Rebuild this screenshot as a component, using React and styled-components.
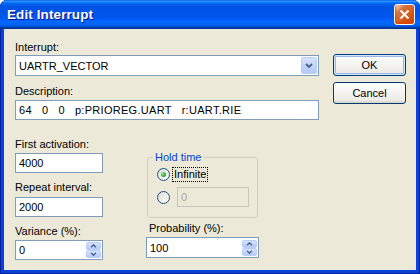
import React from "react";
import styled, { createGlobalStyle } from "styled-components";

const GlobalStyle = createGlobalStyle`
  html, body { margin: 0; padding: 0; background: #fff; overflow: hidden; }
  body { font-family: "Liberation Sans", Arial, sans-serif; font-size: 11px; color: #000; }
`;

const Window = styled.div`
  width: 420px;
  height: 274px;
  display: flex;
  flex-direction: column;
  border-radius: 7px 7px 0 0;
  overflow: hidden;
  background: #0842d6;
  box-shadow: inset 1px 0 #001ea0, inset -1px 0 #001ea0, inset 0 -1px #001ea0;
`;

const TitleBar = styled.div`
  height: 29px;
  flex: none;
  box-sizing: border-box;
  display: flex;
  align-items: center;
  justify-content: space-between;
  padding: 0 5px 1px 7px;
  background: linear-gradient(180deg, #0058ee 0%, #3593ff 4%, #288eff 6%, #127dff 8%, #036ffc 10%,
    #0262ee 14%, #0057e5 20%, #0054e3 24%, #0055eb 56%, #005bf5 66%, #026afe 76%, #0062ef 86%,
    #0052d6 92%, #0040ab 94%, #003092 100%);
`;

const Title = styled.span`
  color: #fff;
  font: bold 13.5px "Liberation Sans", Arial, sans-serif;
  letter-spacing: 0.1px;
  text-shadow: 1px 1px #0f1089;
`;

const CloseButton = styled.div`
  width: 21px;
  height: 21px;
  box-sizing: border-box;
  border: 1px solid #fff;
  border-radius: 3px;
  display: flex;
  align-items: center;
  justify-content: center;
  background: radial-gradient(circle at 90% 90%, #cc4600 0%, #dc6527 55%, #cd7546 70%, #ffccb2 90%, #fff 100%);
  box-shadow: inset 0 -1px 2px 1px #da4600;
`;

const Client = styled.div`
  flex: 1;
  margin: 0 4px 4px;
  padding: 11px 0 0 11px;
  background: #ece9d8;
  display: flex;
  flex-direction: column;
`;

const TopSection = styled.div`
  display: flex;
  gap: 14px;
`;

const Column = styled.div`
  display: flex;
  flex-direction: column;
  width: ${(p) => p.$width}px;
  margin-top: ${(p) => p.$top || 0}px;
`;

const Label = styled.div`
  height: 14px;
  line-height: 14px;
  padding-left: ${(p) => p.$indent || 0}px;
  margin-top: ${(p) => p.$top || 0}px;
  margin-bottom: ${(p) => (p.$gap === undefined ? 2 : p.$gap)}px;
  white-space: nowrap;
`;

const Box = styled.div`
  box-sizing: border-box;
  height: ${(p) => p.$height || 20}px;
  width: ${(p) => (p.$width ? `${p.$width}px` : "auto")};
  border: 1px solid ${(p) => (p.$disabled ? "#c9c7ba" : "#7f9db9")};
  background: ${(p) => (p.$disabled ? "#ece9d8" : "#fff")};
  color: ${(p) => (p.$disabled ? "#aca899" : "#000")};
  display: flex;
  align-items: center;
  padding-left: 3px;
  letter-spacing: ${(p) => p.$spacing || 0}px;
  white-space: pre;
  overflow: hidden;
`;

const Grow = styled.span`
  flex: 1;
`;

const DropButton = styled.div`
  width: 16px;
  height: 17px;
  margin-right: 1px;
  box-sizing: border-box;
  border: 1px solid #bacdf7;
  border-radius: 2px;
  background: linear-gradient(180deg, #d8e4fd 0%, #c1d3fb 50%, #b4caf9 100%);
  display: flex;
  align-items: center;
  justify-content: center;
`;

const Spin = styled.div`
  width: 15px;
  height: 16px;
  margin-right: 1px;
  display: flex;
  flex-direction: column;
`;

const SpinHalf = styled.div`
  flex: 1;
  box-sizing: border-box;
  border: 1px solid #bacdf7;
  border-radius: 2px;
  background: linear-gradient(180deg, #d8e4fd 0%, #c1d3fb 60%, #b4caf9 100%);
  display: flex;
  align-items: center;
  justify-content: center;
`;

const ButtonColumn = styled.div`
  display: flex;
  flex-direction: column;
  gap: 6px;
  padding-top: 14px;
`;

const Button = styled.div`
  width: 73px;
  height: 22px;
  box-sizing: border-box;
  border: 1px solid #003c74;
  border-radius: 3px;
  display: flex;
  align-items: center;
  justify-content: center;
  background: linear-gradient(180deg, #fff 0%, #ecebe6 86%, #d6d0c5 100%);
  box-shadow: ${(p) =>
    p.$default
      ? "inset 0 0 0 1px #cee7ff, inset 0 0 0 2px #98b8ea"
      : "none"};
`;

const BottomSection = styled.div`
  display: flex;
  gap: 43px;
  margin-top: 17px;
`;

const Group = styled.fieldset`
  margin: 14px 0 0 1px;
  padding: 0;
  width: 111px;
  box-sizing: border-box;
  border: 1px solid #d0d0bf;
  border-radius: 3px;
  min-width: 0;
`;

const Legend = styled.legend`
  margin-left: 5px;
  padding: 0 2px;
  line-height: 13px;
  color: #0046d5;
`;

const GroupBody = styled.div`
  display: flex;
  flex-direction: column;
  gap: 5px;
  padding: 2px 0 10px 9px;
`;

const RadioRow = styled.div`
  display: flex;
  align-items: center;
  gap: ${(p) => p.$gap}px;
  height: ${(p) => p.$height}px;
`;

const Radio = styled.div`
  width: 13px;
  height: 13px;
  box-sizing: border-box;
  border-radius: 50%;
  border: 1px solid #1c5180;
  background: linear-gradient(135deg, #dcdcd7 0%, #fff 100%);
  display: flex;
  align-items: center;
  justify-content: center;
  flex: none;
  &::after {
    content: "";
    display: ${(p) => (p.$checked ? "block" : "none")};
    width: 5px;
    height: 5px;
    border-radius: 50%;
    background: radial-gradient(circle at 35% 35%, #8ee88e 0%, #21a121 70%);
  }
`;

const FocusText = styled.span`
  border: 1px dotted #000;
  padding: 0 1px;
  line-height: 13px;
`;

const Chevron = ({ up, w = 8, h = 5 }) => (
  <svg width={w} height={h} viewBox="0 0 8 5">
    <path
      d={up ? "M1 4 L4 1 L7 4" : "M1 1 L4 4 L7 1"}
      fill="none"
      stroke="#4d6185"
      strokeWidth="1.8"
    />
  </svg>
);

const SpinBox = ({ value, width, height }) => (
  <Box $width={width} $height={height}>
    <Grow>{value}</Grow>
    <Spin>
      <SpinHalf>
        <Chevron up w={7} h={4} />
      </SpinHalf>
      <SpinHalf>
        <Chevron w={7} h={4} />
      </SpinHalf>
    </Spin>
  </Box>
);

export default function App() {
  return (
    <>
      <GlobalStyle />
      <Window>
        <TitleBar>
          <Title>Edit Interrupt</Title>
          <CloseButton>
            <svg width="11" height="11" viewBox="0 0 11 11">
              <path d="M1.5 1.5 L9.5 9.5 M9.5 1.5 L1.5 9.5" stroke="#fff" strokeWidth="2" />
            </svg>
          </CloseButton>
        </TitleBar>
        <Client>
          <TopSection>
            <Column $width={304}>
              <Label $gap={1}>Interrupt:</Label>
              <Box $height={21}>
                <Grow>UARTR_VECTOR</Grow>
                <DropButton>
                  <Chevron />
                </DropButton>
              </Box>
              <Label $top={8}>Description:</Label>
              <Box $spacing={0.3}>64   0   0   p:PRIOREG.UART   r:UART.RIE</Box>
            </Column>
            <ButtonColumn>
              <Button $default>OK</Button>
              <Button>Cancel</Button>
            </ButtonColumn>
          </TopSection>
          <BottomSection>
            <Column $width={88}>
              <Label>First activation:</Label>
              <Box>4000</Box>
              <Label $top={7} $gap={3}>Repeat interval:</Label>
              <Box>2000</Box>
              <Label $top={7}>Variance (%):</Label>
              <SpinBox value="0" />
            </Column>
            <Column $width={113}>
              <Group>
                <Legend>Hold time</Legend>
                <GroupBody>
                  <RadioRow $gap={2} $height={16}>
                    <Radio $checked />
                    <FocusText>Infinite</FocusText>
                  </RadioRow>
                  <RadioRow $gap={7} $height={20}>
                    <Radio />
                    <Box $disabled $width={72}>0</Box>
                  </RadioRow>
                </GroupBody>
              </Group>
              <Label $top={3} $indent={3}>Probability (%):</Label>
              <SpinBox value="100" height={21} />
            </Column>
          </BottomSection>
        </Client>
      </Window>
    </>
  );
}
